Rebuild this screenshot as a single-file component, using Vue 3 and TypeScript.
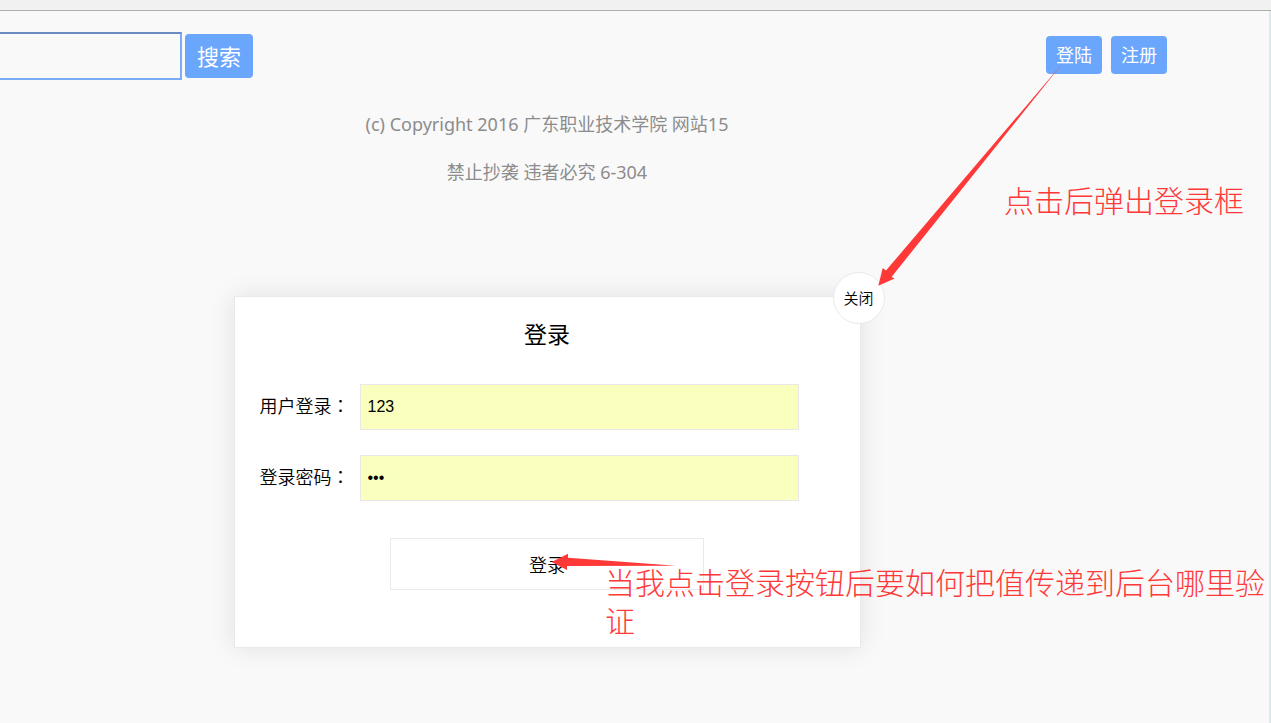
<script setup lang="ts">
import { ref } from 'vue'

const query = ref('')
const username = ref('123')
const password = ref('123')
const copyright: string[] = [
  '(c) Copyright 2016 广东职业技术学院 网站15',
  '禁止抄袭 违者必究 6-304',
]
</script>

<template>
  <div class="screen">
    <div class="chrome"></div>
    <div class="page">
      <header class="header">
        <form class="search" @submit.prevent>
          <input v-model="query" class="search-box" type="text" aria-label="搜索" />
          <button class="pill pill-large" type="submit">搜索</button>
        </form>
        <nav class="account">
          <button class="pill" type="button">登陆</button>
          <button class="pill" type="button">注册</button>
        </nav>
      </header>

      <main class="content">
        <div class="copyright">
          <p v-for="line in copyright" :key="line">{{ line }}</p>
        </div>

        <section class="dialog" role="dialog" aria-labelledby="dialog-title">
          <button class="close" type="button">关闭</button>
          <h2 id="dialog-title">登录</h2>
          <form class="login" @submit.prevent>
            <div class="field">
              <label for="username">用户登录<span class="colon">：</span></label>
              <input id="username" v-model="username" type="text" />
            </div>
            <div class="field">
              <label for="password">登录密码<span class="colon">：</span></label>
              <input id="password" v-model="password" type="password" />
            </div>
            <button class="submit" type="submit">登录</button>
          </form>
        </section>
      </main>
    </div>

    <svg class="arrow arrow-close" width="190" height="230" viewBox="0 0 190 230" aria-hidden="true">
      <path d="M8.3 225.7 12.7 208 16 210.5 193 2.7 21.5 217 24.7 218.5Z" />
    </svg>
    <svg class="arrow arrow-submit" width="130" height="20" viewBox="0 0 130 20" aria-hidden="true">
      <path d="M1.7 12 18 3.7V7.7L126 15.7 17 16V20Z" />
    </svg>
    <p class="note note-close">点击后弹出登录框</p>
    <p class="note note-submit">当我点击登录按钮后要如何把值传递到后台哪里验证</p>
  </div>
</template>

<style>
body {
  margin: 0;
  background: #f9f9f9;
}
</style>

<style scoped>
.screen {
  position: relative;
  display: flex;
  flex-direction: column;
  min-height: 100vh;
  overflow: hidden;
  background: #f9f9f9;
  color: #000;
  font-family: "Noto Sans", "Noto Sans CJK SC", sans-serif;
  font-size: 18px;
  font-weight: 350;
}

.screen *,
.screen {
  box-sizing: border-box;
}

button,
input {
  margin: 0;
  font-family: inherit;
  font-weight: inherit;
  color: inherit;
}

.chrome {
  height: 11px;
  background: #f1f1f1;
  border-bottom: 1px solid #adadad;
}

.page {
  flex: 1;
  border-right: 2px solid #dfe9ec;
}

.header {
  display: flex;
  justify-content: space-between;
  align-items: center;
  height: 90px;
  padding-right: 102px;
}

.search {
  display: flex;
  align-items: center;
  gap: 3px;
}

.search-box {
  width: 182px;
  height: 48px;
  padding: 0 8px;
  border: 2px solid #77acf7;
  border-top-color: #6b8cc3;
  border-left: 0;
  background: #f9f9f9;
  font-size: 18px;
}

.account {
  display: flex;
  gap: 9px;
  padding-bottom: 2px;
}

.pill {
  height: 38px;
  padding: 0 10px;
  border: 0;
  border-radius: 4px;
  background: #6aa6fb;
  color: #fff;
  font-size: 18px;
  font-weight: 400;
  line-height: 36px;
}

.pill-large {
  height: 44px;
  padding: 0 12px;
  font-size: 22px;
}

.content {
  padding-right: 175px;
}

.copyright {
  margin-top: -1px;
  color: #8c8c8c;
  font-weight: 400;
  text-align: center;
}

.copyright p {
  margin: 0;
  line-height: 48px;
}

.dialog {
  position: relative;
  width: 627px;
  max-width: 100%;
  margin: 100px auto 0;
  padding: 17px 25px 57px;
  border: 1px solid #eaeaea;
  background: #fff;
  box-shadow: 0 0 25px rgba(0, 0, 0, 0.1);
}

.dialog h2 {
  margin: 0 0 30px;
  font-size: 23px;
  font-weight: 400;
  line-height: 40px;
  text-align: center;
}

.close {
  position: absolute;
  top: -25px;
  right: -25px;
  width: 52px;
  height: 52px;
  padding: 0 0 2px;
  border: 1px solid #eaeaea;
  border-radius: 50%;
  background: #fff;
  font-size: 15px;
}

.login {
  display: flex;
  flex-direction: column;
  gap: 25px;
}

.field {
  display: flex;
  align-items: center;
}

.field label {
  width: 100px;
  padding-bottom: 2px;
  line-height: 40px;
}

.colon {
  font-family: "Noto Sans CJK TC", sans-serif;
  line-height: 1;
}

.field input {
  flex: 1;
  height: 46px;
  margin-right: 36px;
  padding: 0 7px;
  border: 1px solid #e8e8e8;
  background: #faffbd;
  font-family: "Liberation Sans", Arial, sans-serif;
  font-size: 16px;
}

.submit {
  align-self: center;
  width: 314px;
  height: 52px;
  margin-top: 12px;
  border: 1px solid #eaeaea;
  background: #fff;
  font-size: 18px;
}

.arrow {
  position: absolute;
  overflow: visible;
  fill: #ff3838;
  pointer-events: none;
}

.arrow-close {
  left: 870px;
  top: 60px;
}

.arrow-submit {
  left: 550px;
  top: 550px;
}

.note {
  position: absolute;
  margin: 0;
  color: #ff3838;
  font-family: "Noto Sans CJK SC", sans-serif;
  font-size: 30px;
  font-weight: 300;
  line-height: 38px;
}

.note-close {
  left: 1004px;
  top: 180px;
}

.note-submit {
  left: 605px;
  top: 562px;
  width: 665px;
}
</style>
